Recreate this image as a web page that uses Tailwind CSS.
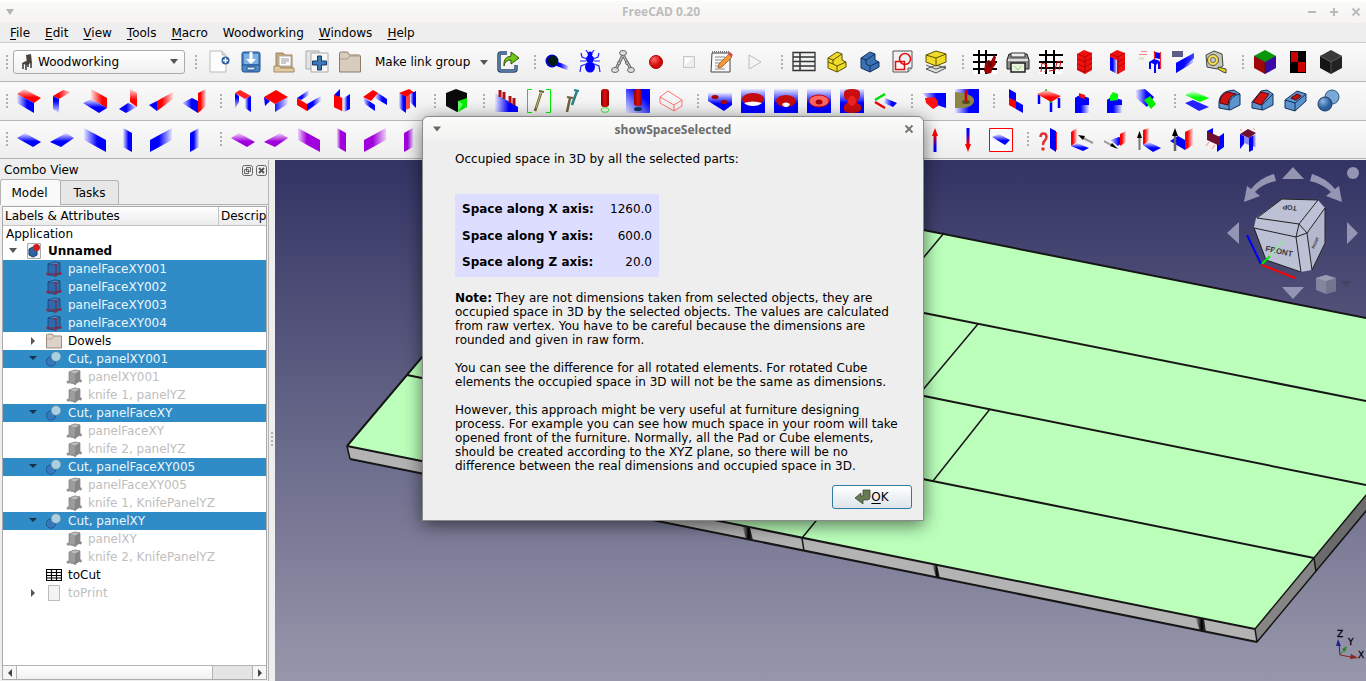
<!DOCTYPE html>
<html lang="en">
<head>
<meta charset="utf-8">
<title>FreeCAD 0.20</title>
<script src="https://cdn.jsdelivr.net/npm/@tailwindcss/browser@4"></script>
</head>
<body class="relative flex h-screen flex-col overflow-hidden bg-[#eeeeee] font-['DejaVu_Sans',sans-serif] text-xs leading-[14px] text-black">

<!-- shared gradients and symbols -->
<svg class="absolute size-0" aria-hidden="true">
  <defs>
    <linearGradient id="bR"><stop offset="0" stop-color="#00f"/><stop offset=".4" stop-color="#00f"/><stop offset="1" stop-color="#e6e6ff"/></linearGradient>
    <linearGradient id="bL"><stop offset="0" stop-color="#e6e6ff"/><stop offset=".6" stop-color="#00f"/></linearGradient>
    <linearGradient id="bD" x2="0" y2="1"><stop offset=".3" stop-color="#00f"/><stop offset="1" stop-color="#e6e6ff"/></linearGradient>
    <linearGradient id="bU" x2="0" y2="1"><stop offset="0" stop-color="#e6e6ff"/><stop offset=".6" stop-color="#00f"/></linearGradient>
    <linearGradient id="bDiag" x1="1" y2="1" x2="0"><stop offset=".3" stop-color="#00f"/><stop offset="1" stop-color="#e6e6ff"/></linearGradient>
    <linearGradient id="rR"><stop offset=".3" stop-color="#f00"/><stop offset="1" stop-color="#ffe0e0"/></linearGradient>
    <linearGradient id="rL"><stop offset="0" stop-color="#ffe0e0"/><stop offset=".7" stop-color="#f00"/></linearGradient>
    <linearGradient id="rU" x2="0" y2="1"><stop offset="0" stop-color="#ffd8d8"/><stop offset=".6" stop-color="#f00"/></linearGradient>
    <linearGradient id="pU" x2="0" y2="1"><stop offset="0" stop-color="#f3dcfb"/><stop offset=".6" stop-color="#a000dc"/></linearGradient>
    <linearGradient id="pR"><stop offset=".4" stop-color="#a000dc"/><stop offset="1" stop-color="#ead0f6"/></linearGradient>
    <linearGradient id="pL"><stop offset="0" stop-color="#ead0f6"/><stop offset=".4" stop-color="#a000dc"/></linearGradient>
    <linearGradient id="gU" x2="0" y2="1"><stop offset="0" stop-color="#dfffdf"/><stop offset=".6" stop-color="#0f0"/></linearGradient>
    <linearGradient id="cap"><stop offset="0" stop-color="#8c0000"/><stop offset=".5" stop-color="#e01010"/><stop offset="1" stop-color="#8c0000"/></linearGradient>
    <linearGradient id="kR"><stop offset=".2" stop-color="#000"/><stop offset="1" stop-color="#ddd"/></linearGradient>
    <linearGradient id="arU" x2="0" y2="1"><stop offset=".3" stop-color="#f00"/><stop offset=".8" stop-color="#00f"/></linearGradient>
    <linearGradient id="arD" x2="0" y2="1"><stop offset=".2" stop-color="#00f"/><stop offset=".7" stop-color="#f00"/></linearGradient>
    <radialGradient id="ball" cx=".35" cy=".3"><stop offset="0" stop-color="#f66"/><stop offset="1" stop-color="#d00a0a"/></radialGradient>
    <radialGradient id="sph" cx=".35" cy=".3"><stop offset="0" stop-color="#8fb8e4"/><stop offset="1" stop-color="#2c5f9e"/></radialGradient>
    <linearGradient id="sky" x2="0" y2="1"><stop offset="0" stop-color="#333364"/><stop offset="1" stop-color="#9797ab"/></linearGradient>
    <linearGradient id="knot"><stop offset="0" stop-color="#000" stop-opacity="0"/><stop offset=".6" stop-color="#000"/><stop offset="1" stop-color="#111" stop-opacity=".7"/></linearGradient>
  </defs>
  <symbol id="part" viewBox="0 0 16 16"><path d="M2 3l7-2 5 1v11l-5 2-7-1z" fill="#2c6aad" stroke="#1b3f70" stroke-width=".8"/><path d="M2 3l7-2 5 1-4 2z" fill="#4c8ac8" stroke="#1b3f70" stroke-width=".6"/><path d="M10 4v10" stroke="#7a2342"/><path d="M1 13h8l5-1" stroke="#7a2342" fill="none"/><circle cx="9.500" cy="4" r="1.200" fill="#a32036"/><circle cx="1.500" cy="13" r="1.300" fill="#a32036"/><circle cx="9.500" cy="14.500" r="1.300" fill="#a32036"/><circle cx="14.500" cy="12.500" r="1.300" fill="#a32036"/></symbol>
  <symbol id="ghost" viewBox="0 0 16 16"><path d="M3 3l6-2 5 1v10l-5 3-6-2z" fill="#9c9c9c" stroke="#808080" stroke-width=".7"/><path d="M3 3l6-2 5 1-5 3z" fill="#bdbdbd" stroke="#858585" stroke-width=".5"/><path d="M9 5l5-3v10l-5 3z" fill="#868686"/><circle cx="2" cy="13" r="1.500" fill="#999"/><circle cx="9" cy="14.500" r="1.400" fill="#8c8c8c"/><circle cx="14.500" cy="12" r="1.400" fill="#8c8c8c"/><path d="M1 13.500l8 1" stroke="#8c8c8c"/></symbol>
  <symbol id="cut" viewBox="0 0 16 16"><circle cx="5" cy="10.500" r="4.700" fill="#3578bc" stroke="#1b4f88" stroke-width=".8"/><circle cx="10" cy="5.500" r="5" fill="#a9cfe0" stroke="#4f7f9f" stroke-width=".8"/></symbol>
</svg>

<!-- title bar -->
<header class="relative flex h-[23px] shrink-0 items-center justify-between border-t border-white bg-gradient-to-b from-[#fbfbfa] to-[#f4f3f1] px-[5px]">
  <button aria-label="Window menu" class="flex"><svg class="h-2.5 w-2.5" viewBox="0 0 10 10"><path d="M1 2h8L5 8z" fill="#b4b4b4"/></svg></button>
  <h1 class="font-['Open_Sans',sans-serif] text-xs font-bold text-[#bdbdbd]">FreeCAD 0.20</h1>
  <div class="flex gap-3 pr-0">
    <button aria-label="Minimize"><svg class="h-2.5 w-2.5" viewBox="0 0 10 10"><path d="M1 5h8" stroke="#bbb" stroke-width="2"/></svg></button>
    <button aria-label="Maximize"><svg class="h-2.5 w-2.5" viewBox="0 0 10 10"><path d="M1 5h8M5 1v8" stroke="#bbb" stroke-width="2"/></svg></button>
    <button aria-label="Close"><svg class="h-2.5 w-2.5" viewBox="0 0 10 10"><path d="M1.500 1.500l7 7M8.500 1.500l-7 7" stroke="#bbb" stroke-width="2"/></svg></button>
  </div>
</header>

<!-- menu bar -->
<nav class="flex h-5 shrink-0 items-center gap-[15px] border-b border-[#cccccc] px-[10px] [&_u]:underline-offset-2">
  <button><u>F</u>ile</button><button><u>E</u>dit</button><button><u>V</u>iew</button><button><u>T</u>ools</button><button><u>M</u>acro</button><button>Woodworking</button><button><u>W</u>indows</button><button><u>H</u>elp</button>
</nav>

<!-- toolbar 1 -->
<div class="flex h-[39px] shrink-0 items-center gap-[13px] border-b border-[#b4b4b4] bg-gradient-to-b from-[#fafafa] to-[#eeeeee] pl-[5px] [&_i]:h-[17px] [&_i]:w-1 [&_i]:bg-[radial-gradient(circle,#b0b0b0_1px,transparent_1px)] [&_i]:bg-[size:4px_4px] [&_button>svg]:size-6">
  <div class="flex items-center gap-1">
    <i></i>
    <div class="relative">
      <select aria-label="Workbench" class="h-6 w-[172px] appearance-none rounded-[3px] border border-[#aaaaaa] bg-gradient-to-b from-white to-[#f0f0f0] pl-6"><option>Woodworking</option></select>
      <svg class="pointer-events-none absolute left-2 top-1 h-4 w-3" viewBox="0 0 12 16"><path d="M5 1l5-1 1 9-5 1zM1 9l4-2 5 2-5 2z" fill="#4a4440"/><path d="M2 9v6M5 10v6M10 9v5M7 9v4" stroke="#3a3633" stroke-width="1.500"/></svg>
      <svg class="pointer-events-none absolute right-[7px] top-[9px] h-[5px] w-2" viewBox="0 0 8 5"><path d="M0 0h8L4 5z" fill="#555"/></svg>
    </div>
  </div>
  <div class="-ml-1 flex items-center gap-[9px]">
    <i class="-mr-px"></i>
    <button aria-label="New"><svg viewBox="0 0 24 24"><path d="M4 1h12l4 4v17H4z" fill="#fdfdfd" stroke="#bbb"/><path d="M16 1v4h4" fill="#ddd" stroke="#bbb"/><circle cx="19.500" cy="10.500" r="4" fill="#2d62a3"/><path d="M17 10.500h5M19.500 8v5" stroke="#fff" stroke-width="1.500"/></svg></button>
    <button aria-label="Save"><svg viewBox="0 0 24 24"><rect x="3" y="2" width="18" height="20" rx="2" fill="#4a86c8" stroke="#1f4f8a"/><rect x="5" y="4" width="14" height="10" fill="#7fb0e0"/><path d="M3 15h18" stroke="#1f4f8a"/><path d="M10.500 2v7H7l5 5 5-5h-3.500V2z" fill="#fff"/><rect x="8" y="17" width="8" height="3" rx="1" fill="#dce9f6" stroke="#1f4f8a"/></svg></button>
    <button aria-label="Open"><svg viewBox="0 0 24 24"><path d="M4 3h7l2 2h7v14H4z" fill="#c9a87a" stroke="#a08058"/><rect x="7" y="6" width="12" height="10" fill="#fff" stroke="#aaa"/><path d="M9 9h8M9 11h8M9 13h5" stroke="#999"/><path d="M2 16h5l2 2h13v4H2z" fill="#e2cba4" stroke="#a58a62"/></svg></button>
    <button aria-label="Merge project"><svg viewBox="0 0 24 24"><path d="M1 1h13v18H1z" fill="#e4e4e4" stroke="#aaa"/><path d="M6 3h17v19H6z" fill="#f7f7f7" stroke="#aaa"/><path d="M12.500 6h4v5h5v4h-5v5h-4v-5h-5v-4h5z" fill="#3f76b5" stroke="#173a66"/></svg></button>
    <button aria-label="Create group"><svg viewBox="0 0 24 24"><path d="M1.500 22V3l1-1h7l2 3h10l1 1v16z" fill="#d8ccbf" stroke="#8d7b6d"/><path d="M2 9h7l3-3h10" fill="none" stroke="#a8998b"/></svg></button>
    <button class="ml-1 flex items-center gap-[10px] whitespace-nowrap">Make link group<svg class="mt-px !h-[5px] !w-2" viewBox="0 0 8 5"><path d="M0 0h8L4 5z" fill="#555"/></svg></button>
    <button aria-label="Export link" class="-ml-px"><svg viewBox="0 0 24 24"><path d="M11 3H5Q3 3 3 5v14q0 2 2 2h13q2 0 2-2v-4" fill="none" stroke="#274a70" stroke-width="3.500"/><path d="M11 3H5Q3 3 3 5v14q0 2 2 2h13q2 0 2-2v-4" fill="none" stroke="#7ea2c9"/><path d="M8 16q-1-9 7-10V2l8 6-8 6v-4q-6 0-7 6z" fill="#73c41d" stroke="#2c5b08"/></svg></button>
  </div>
  <div class="flex items-center gap-[9px]">
    <i class="-mr-px"></i>
    <button aria-label="Zoom tool"><svg viewBox="0 0 24 24"><path d="M10 11l14 5-2 4-13-5z" fill="url(#bR)"/><circle cx="7" cy="11" r="6.500" fill="#0000c8"/><circle cx="8" cy="11" r="5" fill="#021d10"/></svg></button>
    <button aria-label="Debug"><svg viewBox="0 0 24 24"><circle cx="12" cy="4" r="2.500" fill="#00f"/><ellipse cx="12" cy="9" rx="4" ry="3.500" fill="#00f"/><ellipse cx="12" cy="17" rx="5" ry="5.500" fill="#00f"/><path d="M9 9L4 7 3 3M15 9l5-2 1-4M8 11H2M16 11h6M8 14l-5 2-1 6M16 14l5 2 1 6M10 3L8 0M14 3l2-3" fill="none" stroke="#22f" stroke-width="1.200"/></svg></button>
    <button aria-label="Dependency graph"><svg viewBox="0 0 24 24"><g fill="none" stroke="#6f6f68" stroke-width="3"><path d="M12 5L5 19M12 5l8 14"/></g><path d="M12 5L5 19M12 5l8 14" stroke="#ccc" fill="none"/><g fill="#ddd" stroke="#666"><ellipse cx="12" cy="3" rx="3.500" ry="2.500"/><circle cx="8" cy="13" r="1.500"/><circle cx="16" cy="13" r="1.500"/><ellipse cx="4" cy="20" rx="3.500" ry="2.500"/><ellipse cx="20" cy="20" rx="3.500" ry="2.500"/></g></svg></button>
    <button aria-label="Record macro"><svg viewBox="0 0 24 24"><circle cx="12" cy="12" r="6.500" fill="url(#ball)" stroke="#a00"/></svg></button>
    <button aria-label="Stop macro"><svg viewBox="0 0 24 24"><rect x="6.500" y="6.500" width="11" height="11" fill="#eee" stroke="#c8c8c8"/><path d="M8 8h7l-7 7z" fill="#fff"/></svg></button>
    <button aria-label="Macros"><svg viewBox="0 0 24 24"><path d="M2 3h18v19H1z" fill="#fafafa" stroke="#444"/><path d="M2 2h18" stroke="#777" stroke-width="2" stroke-dasharray="1 1"/><path d="M5 7h10M5 10h9M5 13h7M5 16h5M5 19h10" stroke="#888"/><path d="M8 18l1-4L19 4l3 3-10 10z" fill="#f49a3c" stroke="#a5541b" stroke-width=".8"/><path d="M18 4l2-2 3 3-2 2z" fill="#d45"/></svg></button>
    <button aria-label="Run macro"><svg viewBox="0 0 24 24"><path d="M6 5v14l12-7z" fill="#f4f4f4" stroke="#bcbcbc"/></svg></button>
  </div>
  <div class="flex items-center gap-[9px]">
    <i class="-mr-px"></i>
    <button aria-label="Spreadsheet"><svg viewBox="0 0 24 24"><path d="M1 2.500h22v18H1z" fill="#eef2ee" stroke="#333" stroke-width="1.300"/><path d="M1 7h22M1 11.500h22M1 16h22M8 2v18" stroke="#333" stroke-width="1.500"/></svg></button>
    <button aria-label="Yellow part"><svg viewBox="0 0 24 24"><path d="M3 12V8l9-6 5 2v6l4 2v5l-9 5-9-4z" fill="#f0da2a" stroke="#5c5000"/><path d="M3 8l5 2 9-6M8 10v4l4 2 9-4M3 12l5 2M12 16v6" fill="none" stroke="#5c5000"/></svg></button>
    <button aria-label="Blue part"><svg viewBox="0 0 24 24"><path d="M3 18V8l9-6 5 2v6l4 2v5l-9 5z" fill="#3a71b4" stroke="#12305a"/><path d="M3 8l5 2 9-6M8 10v4l4 2 9-4M12 16v6" fill="none" stroke="#12305a"/></svg></button>
    <button aria-label="Sketch"><svg viewBox="0 0 24 24"><path d="M2 1h19v17l-4 4H2z" fill="#f3f3f3" stroke="#555"/><path d="M21 18h-4v4" fill="#ccc" stroke="#555"/><rect x="4.500" y="11.500" width="9" height="8" fill="none" stroke="#d11" stroke-width="1.500"/><circle cx="14" cy="9" r="5.500" fill="none" stroke="#d11" stroke-width="1.500"/></svg></button>
    <button aria-label="Pad"><svg viewBox="0 0 24 24"><path d="M2 19l10-4 10 3-10 5z" fill="#ddd" stroke="#555"/><path d="M2 15l10 4 10-3" fill="none" stroke="#555"/><path d="M2 5l10-4 10 3v8l-10 4-10-4z" fill="#f0da2a" stroke="#5c5000"/><path d="M2 5l10 3 10-4M12 8v8" fill="none" stroke="#5c5000"/></svg></button>
  </div>
  <div class="flex items-center gap-[9px]">
    <i class="-mr-px"></i>
    <button aria-label="Grid"><svg viewBox="0 0 24 24"><path d="M0 0h24v24H0z" fill="#fff"/><path d="M0 5h24M0 12h24M0 19h24M6 0v24M13 0v24" stroke="#000" stroke-width="2"/><path d="M12 14l3-4 3 1 3-6 2 2-1 4 1 3-3 4-2 5-4 1-3-3z" fill="#9c0404"/><ellipse cx="17" cy="14" rx="2" ry="3" fill="#600"/></svg></button>
    <button aria-label="Print"><svg viewBox="0 0 24 24"><path d="M3 4h18l2 6v9H1v-9z" fill="#8c8c8c" stroke="#222"/><path d="M5 3h14v4H5z" fill="#eee" stroke="#333"/><path d="M2 10h20" stroke="#ddd" stroke-width="2"/><path d="M5 13h14v9H5z" fill="#e8f2dc" stroke="#222" stroke-width="1.500"/><path d="M8 16l4 4 3-4" stroke="#9c7" fill="none"/></svg></button>
    <button aria-label="Grid edges"><svg viewBox="0 0 24 24"><path d="M0 0h24v24H0z" fill="#fff"/><path d="M0 5h24M0 12h24M0 18h24M7 0v24M15 0v24" stroke="#000" stroke-width="2"/><path d="M3 13l-1 9M3 13l5 2-2 7M10 21l6-1 2-8M18 12l4-1-2 9" fill="none" stroke="#d00"/></svg></button>
    <button aria-label="Drawers"><svg viewBox="0 0 24 24"><path d="M5 4l7-4 8 3v17l-7 4-8-4z" fill="#f01010"/><path d="M5 4l8 3 7-4M13 7v17M5 9l8 3 7-4M5 14l8 3 7-4M5 19l8 3 7-4" stroke="#800" fill="none" stroke-width=".6"/></svg></button>
    <button aria-label="Cabinet"><svg viewBox="0 0 24 24"><path d="M5 4l7-4 8 3v17l-7 4-8-4z" fill="#f01010"/><path d="M5 7l7 3v14l-7-4z" fill="url(#bR)"/><path d="M5 4l8 3 7-4M13 7v17M13 12l7-4M13 17l7-4" stroke="#800" fill="none" stroke-width=".6"/></svg></button>
    <button aria-label="Chair"><svg viewBox="0 0 24 24"><path d="M3 1.500h6M1 4.500h8" stroke="#e88"/><path d="M1 7h5v3H1z" fill="#dde6c8"/><path d="M17 2l5 1v6l-5-1z" fill="#00f"/><path d="M16.500 1v11M22.500 2v17" stroke="#f22" stroke-width="1.200"/><path d="M11 12l5-3 6 2-4 4z" fill="#00f"/><path d="M12 12v7M17 14v9M21 12v7" stroke="#00f" stroke-width="2"/></svg></button>
    <button aria-label="Panel"><svg viewBox="0 0 24 24"><path d="M1 1h11v6H1z" fill="#5c5c86"/><path d="M5 13L23 3v9L5 23z" fill="url(#bR)"/><path d="M5 13L23 3v5L5 23z" fill="#00f" opacity=".7"/></svg></button>
    <button aria-label="Measure"><svg viewBox="0 0 24 24"><path d="M2 5l8-4 8 3 1 12-6 3-10-2z" fill="#c4c8b8" stroke="#444"/><circle cx="9" cy="10" r="5.500" fill="#f6e04a" stroke="#555"/><circle cx="9" cy="10" r="2.500" fill="#ccc" stroke="#666"/><path d="M14 17l8 2v4l-3-1-5-3z" fill="#e8d020" stroke="#444"/></svg></button>
  </div>
  <div class="flex items-center gap-[9px]">
    <i class="-mr-px"></i>
    <button aria-label="Colours"><svg viewBox="0 0 24 24"><path d="M1 6l11-6 11 6-11 6z" fill="#0a960a"/><path d="M1 6l11 6v12L1 18z" fill="#a00808"/><path d="M23 6l-11 6v12l11-6z" fill="#3a0aa8"/><path d="M1 6l11 6 11-6M12 12v12" stroke="#222" fill="none" stroke-width=".6"/></svg></button>
    <button aria-label="Checker"><svg viewBox="0 0 24 24"><path d="M4 1h16v22H4z" fill="#000"/><path d="M5 2h7v10H5zM12 12h7v10h-7z" fill="#c00"/></svg></button>
    <button aria-label="Black cube"><svg viewBox="0 0 24 24"><path d="M1 6l11-6 11 6-11 6z" fill="#3a3a38"/><path d="M1 6l11 6v12L1 18z" fill="#151515"/><path d="M23 6l-11 6v12l11-6z" fill="#222220"/><path d="M1 6l11 6 11-6M12 12v12" stroke="#555" fill="none"/></svg></button>
  </div>
</div>

<!-- toolbar 2 -->
<div class="flex h-[39px] shrink-0 items-center gap-[13px] border-b border-[#b4b4b4] bg-gradient-to-b from-[#fafafa] to-[#eeeeee] pl-[5px] [&_i]:-mr-px [&_i]:h-[17px] [&_i]:w-1 [&_i]:bg-[radial-gradient(circle,#b0b0b0_1px,transparent_1px)] [&_i]:bg-[size:4px_4px] [&_svg]:size-6 [&>div]:flex [&>div]:items-center [&>div]:gap-[9px]">
  <div><i></i>
    <button aria-label="Corner 1"><svg viewBox="0 0 24 24"><path d="M0 5l7-5 17 9-7 5z" fill="url(#rU)"/><path d="M0 5l17 9v10L0 14z" fill="url(#bL)"/></svg></button>
    <button aria-label="Corner 2"><svg viewBox="0 0 24 24"><path d="M3 7L13 1l8 2L9 10z" fill="url(#rR)"/><path d="M3 7l6 3v14l-6-4z" fill="url(#bD)"/></svg></button>
    <button aria-label="Corner 3"><svg viewBox="0 0 24 24"><path d="M8 0l16 9v10L8 10z" fill="url(#rL)"/><path d="M0 14l8-4 16 9-8 5z" fill="url(#bU)"/></svg></button>
    <button aria-label="Corner 4"><svg viewBox="0 0 24 24"><path d="M14 0l7 4v14l-7-5z" fill="url(#rU)"/><path d="M3 20l9-6 9 4-11 6z" fill="url(#bR)"/></svg></button>
    <button aria-label="Corner 5"><svg viewBox="0 0 24 24"><path d="M0 16l8-4v10z" fill="#00f"/><path d="M8 12l16-9v7L8 22z" fill="url(#rR)"/></svg></button>
    <button aria-label="Corner 6"><svg viewBox="0 0 24 24"><path d="M0 14l10-5 6 3v12z" fill="url(#bL)"/><path d="M16 4l8-4v17l-8 7z" fill="url(#rR)"/></svg></button>
  </div>
  <div><i></i>
    <button aria-label="Frame 1"><svg viewBox="0 0 24 24"><path d="M4 4l4 3v6l-4 7z" fill="url(#bD)"/><path d="M4 4l5-3 11 6-6 3z" fill="#f22"/><path d="M14 10l6-3v16l-6-4z" fill="url(#bL)"/></svg></button>
    <button aria-label="Frame 2"><svg viewBox="0 0 24 24"><path d="M0 8l6 4-5 5zM11 15l13-7v7l-13 8z" fill="url(#bR)"/><path d="M0 8l12-7 12 7-13 7z" fill="#f00"/></svg></button>
    <button aria-label="Frame 3"><svg viewBox="0 0 24 24"><path d="M0 9l12-8v5L4 11z" fill="url(#bR)"/><path d="M0 9l10 6v7L0 16z" fill="#f00"/><path d="M10 15l14-8v5l-14 10z" fill="url(#bR)"/></svg></button>
    <button aria-label="Frame 4"><svg viewBox="0 0 24 24"><path d="M4 6l6-6v9z" fill="#00f"/><path d="M4 6l10 3v14L4 18z" fill="url(#rR)"/><path d="M4 6l8 3v13l-8-4z" fill="#f00"/><path d="M14 9l6-4v15l-6 3z" fill="url(#bL)"/></svg></button>
    <button aria-label="Frame 5"><svg viewBox="0 0 24 24"><path d="M12 2l12 8v6L12 9z" fill="url(#bL)"/><path d="M0 8l10-7 5 3-7 8z" fill="#f00"/><path d="M0 8l12 8v6L2 15z" fill="url(#bL)"/></svg></button>
    <button aria-label="Frame 6"><svg viewBox="0 0 24 24"><path d="M3 4l10-4 6 4-9 5z" fill="#f00"/><path d="M10 8l4-3v14l-4 2z" fill="#f44"/><path d="M3 4l7 4v16l-7-5z" fill="url(#bL)"/><path d="M14 5l6-3v17l-6-6z" fill="url(#bL)"/></svg></button>
  </div>
  <div><i></i>
    <button aria-label="Select face"><svg viewBox="0 0 24 24"><path d="M1 4l10-4 11 4v13l-10 6L1 17z" fill="#0a0a0a"/><path d="M13 12l9-3v9l-9 5z" fill="#0e0"/><path d="M13 23V12l5 3z" fill="#6f6"/></svg></button>
  </div>
  <div><i></i>
    <button aria-label="Dowel row"><svg viewBox="0 0 24 24"><path d="M1 4l23 14v5H1z" fill="url(#bL)"/><path d="M6 1v7M10 3v7M16 7v7M20 9v7" stroke="#b01010" stroke-width="3"/></svg></button>
    <button aria-label="Screw frame"><svg viewBox="0 0 24 24"><path d="M5 .5H.500v23H5M19 .5h4.500v23H19" fill="none" stroke="#0e0"/><path d="M14 4L8 22" stroke="#6b6326" stroke-width="2.500"/><path d="M14 4L9 19" stroke="#c4b878"/><path d="M12 2l5 1" stroke="#6b6326" stroke-width="2"/></svg></button>
    <button aria-label="Two screws"><svg viewBox="0 0 24 24"><path d="M17 2l-5 14" stroke="#2b7f86" stroke-width="2.500"/><path d="M14 1l5 1" stroke="#2b7f86" stroke-width="2"/><path d="M10 9L7 23" stroke="#6b6340" stroke-width="2.500"/><path d="M7 8l6 1" stroke="#6b6340" stroke-width="2"/></svg></button>
    <button aria-label="Dowel"><svg viewBox="0 0 24 24"><rect x="8" y="0" width="8" height="18" rx="3" fill="url(#cap)"/><ellipse cx="12" cy="21" rx="4" ry="2.300" fill="none" stroke="#3e3"/></svg></button>
    <button aria-label="Drill"><svg viewBox="0 0 24 24"><path d="M0 0h24v24H0z" fill="url(#bDiag)"/><rect x="8" y="0" width="8" height="17" rx="3" fill="url(#cap)"/><ellipse cx="12" cy="20" rx="4" ry="2" fill="#043a5a"/></svg></button>
    <button aria-label="Wire box"><svg viewBox="0 0 24 24"><path d="M1 8l8-6 14 9v6l-8 5-14-8zM1 8l14 8 8-5M15 16v6" fill="none" stroke="#f55" stroke-width=".8"/></svg></button>
  </div>
  <div><i></i>
    <button aria-label="Holes"><svg viewBox="0 0 24 24"><path d="M0 4h24v12l-8 6L0 12z" fill="url(#bU)"/><ellipse cx="7" cy="8" rx="3.500" ry="2" fill="#a00"/><ellipse cx="16" cy="13" rx="3.500" ry="2" fill="#a00"/></svg></button>
    <button aria-label="Round hole"><svg viewBox="0 0 24 24"><path d="M0 0h24v24H0z" fill="url(#bU)"/><ellipse cx="12" cy="10" rx="11" ry="6" fill="#c40c0c"/><path d="M3 14q9-3 18 0-3 3-9 3t-9-3z" fill="#fff"/></svg></button>
    <button aria-label="Countersink"><svg viewBox="0 0 24 24"><path d="M0 0h24v24H0z" fill="url(#bU)"/><ellipse cx="12" cy="12" rx="10" ry="6" fill="#c40c0c"/><path d="M8 15q4-3 8 0-1 3-4 3t-4-3z" fill="#fff"/></svg></button>
    <button aria-label="Counterbore"><svg viewBox="0 0 24 24"><path d="M0 0h24v24H0z" fill="url(#bU)"/><ellipse cx="12" cy="12" rx="10" ry="6" fill="#f66" stroke="#c00"/><ellipse cx="12" cy="13" rx="3.500" ry="2.500" fill="#a00"/></svg></button>
    <button aria-label="Double bore"><svg viewBox="0 0 24 24"><path d="M0 0h24v24H0z" fill="url(#bU)"/><path d="M4 4q0-4 8-4t8 4v4q0 2-3 3v3q4 1 4 4v3q-2 3-9 3t-8-3v-3q0-3 3-4v-3q-3-1-3-3z" fill="#c80e0e"/><ellipse cx="12" cy="12" rx="4" ry="5" fill="#e22"/></svg></button>
    <button aria-label="Directions"><svg viewBox="0 0 24 24"><path d="M2 11L12 5" stroke="#0d0" stroke-width="2.500"/><path d="M2 13l10 6" stroke="#e00" stroke-width="2.500"/><path d="M12 9l12 5-4 4-9-4z" fill="url(#bL)"/></svg></button>
  </div>
  <div><i></i>
    <button aria-label="Magnet edge"><svg viewBox="0 0 24 24"><path d="M0 4h24v15l-12-4z" fill="url(#bL)"/><path d="M3 9l9-1 4 4v5l-5 3-7-6z" fill="#f11"/></svg></button>
    <button aria-label="Pocket"><svg viewBox="0 0 24 24"><path d="M0 0h24v24H0z" fill="url(#bL)"/><path d="M0 3q20 2 19 9-1 8-19 7z" fill="#8d8646"/><ellipse cx="11" cy="13" rx="4" ry="2" fill="#555020"/><path d="M11 1v12" stroke="#c00" stroke-width="2.500"/></svg></button>
  </div>
  <div><i></i>
    <button aria-label="Shift panel"><svg viewBox="0 0 24 24"><path d="M5 0l7 4v9l-7-4z" fill="#00f"/><path d="M5 9l7 3v8l-7-4z" fill="#f00"/><path d="M12 12l7 4v8l-7-4z" fill="#00f"/></svg></button>
    <button aria-label="Table"><svg viewBox="0 0 24 24"><path d="M2 6v9M14 12v11M22 9v10" stroke="#00f" stroke-width="2.500"/><path d="M0 5l9-4 15 6-10 6z" fill="url(#rU)"/><circle cx="14" cy="13" r="1" fill="#0c0"/><circle cx="9" cy="1" r="1" fill="#0c0"/></svg></button>
    <button aria-label="Box red"><svg viewBox="0 0 24 24"><path d="M5 9l5-3 9 3v15H5z" fill="url(#bR)"/><path d="M5 9l5-3 9 3v7H5z" fill="#00f"/><path d="M9 4l6 2v4l-6-2z" fill="#e11"/></svg></button>
    <button aria-label="Box green"><svg viewBox="0 0 24 24"><path d="M4 11l5-3 10 3v13H4z" fill="url(#bR)"/><path d="M4 11l5-3 10 3v5H4z" fill="#00f"/><path d="M7 7l3-4 5 2v6l-8 1z" fill="#0f0"/></svg></button>
    <button aria-label="Roll"><svg viewBox="0 0 24 24"><path d="M0 1l9-1 9 8-7 10L0 9z" fill="url(#bL)"/><path d="M8 11l6-4 6 8-5 5z" fill="#0e0"/></svg></button>
  </div>
  <div><i></i>
    <button aria-label="Sheets"><svg viewBox="0 0 24 24"><path d="M0 14l8-3 16 7-10 4z" fill="#22f"/><path d="M0 6l8-4 16 7-9 4z" fill="url(#gU)"/></svg></button>
    <button aria-label="Fillet"><svg viewBox="0 0 24 24"><path d="M1 13q1-9 9-11l6-1 6 4v11l-10 5-11-2z" fill="#5b93cf" stroke="#12305a"/><path d="M2 14q0-9 8-11l8 2q-8 2-8 11z" fill="#d01414" stroke="#600"/><path d="M11 21v-6q1-8 11-10" fill="none" stroke="#12305a"/></svg></button>
    <button aria-label="Chamfer"><svg viewBox="0 0 24 24"><path d="M1 13l9-11 6-1 6 4v11l-10 5-11-2z" fill="#5b93cf" stroke="#12305a"/><path d="M2 13L10 3l8 2-8 11z" fill="#d01414" stroke="#600"/><path d="M11 21v-5L22 5" fill="none" stroke="#12305a"/></svg></button>
    <button aria-label="Thickness"><svg viewBox="0 0 24 24"><path d="M1 11l12-9 9 3v7l-11 10-10-3z" fill="#5b93cf" stroke="#12305a"/><path d="M1 11l10 3L22 5M11 14v8" fill="none" stroke="#12305a"/><path d="M7 9l6-4 4 2-5 4z" fill="#c01010" stroke="#600"/></svg></button>
    <button aria-label="Boolean"><svg viewBox="0 0 24 24"><circle cx="15" cy="8" r="7" fill="#7aa9d8" stroke="#2c5683"/><circle cx="8" cy="15" r="7" fill="url(#sph)" stroke="#173a66"/></svg></button>
  </div>
</div>

<!-- toolbar 3 -->
<div class="mb-px flex h-[38px] shrink-0 items-center gap-[13px] border-b border-[#b4b4b4] bg-gradient-to-b from-[#fafafa] to-[#eeeeee] pl-[5px] [&_i]:-mr-px [&_i]:h-[17px] [&_i]:w-1 [&_i]:bg-[radial-gradient(circle,#b0b0b0_1px,transparent_1px)] [&_i]:bg-[size:4px_4px] [&_svg]:size-6 [&>div]:flex [&>div]:items-center [&>div]:gap-[9px]">
  <div><i></i>
    <button aria-label="Panel XY"><svg viewBox="0 0 24 24"><path d="M0 10l8-5 16 9-8 5z" fill="url(#bU)"/></svg></button>
    <button aria-label="Panel YX"><svg viewBox="0 0 24 24"><path d="M0 14l16-9 8 5-13 9z" fill="url(#bU)"/></svg></button>
    <button aria-label="Panel XZ"><svg viewBox="0 0 24 24"><path d="M1 0l22 12v12L1 12z" fill="url(#bL)"/></svg></button>
    <button aria-label="Panel ZX"><svg viewBox="0 0 24 24"><path d="M7 0l9 5v19l-9-5z" fill="url(#bL)"/></svg></button>
    <button aria-label="Panel YZ"><svg viewBox="0 0 24 24"><path d="M1 12L23 0v12L1 24z" fill="url(#bR)"/></svg></button>
    <button aria-label="Panel ZY"><svg viewBox="0 0 24 24"><path d="M8 5l9-5v19l-9 5z" fill="url(#bR)"/></svg></button>
  </div>
  <div><i></i>
    <button aria-label="Face XY"><svg viewBox="0 0 24 24"><path d="M0 10l8-5 16 9-8 5z" fill="url(#pU)"/></svg></button>
    <button aria-label="Face YX"><svg viewBox="0 0 24 24"><path d="M0 14l16-9 8 5-13 9z" fill="url(#pU)"/></svg></button>
    <button aria-label="Face XZ"><svg viewBox="0 0 24 24"><path d="M1 0l22 12v12L1 12z" fill="url(#pL)"/></svg></button>
    <button aria-label="Face ZX"><svg viewBox="0 0 24 24"><path d="M7 0l9 5v19l-9-5z" fill="url(#pL)"/></svg></button>
    <button aria-label="Face YZ"><svg viewBox="0 0 24 24"><path d="M1 12L23 0v12L1 24z" fill="url(#pR)"/></svg></button>
    <button aria-label="Face ZY"><svg viewBox="0 0 24 24"><path d="M8 5l9-5v19l-9 5z" fill="url(#pR)"/></svg></button>
  </div>
  <div class="w-[477px]"></div>
  <div>
    <button aria-label="Move up"><svg viewBox="0 0 24 24"><path d="M12 0l3 8h-1.500v16h-3V8H9z" fill="url(#arU)"/></svg></button>
    <button aria-label="Move down"><svg viewBox="0 0 24 24"><path d="M12 24l3-8h-1.500V0h-3v16H9z" fill="url(#arD)"/></svg></button>
    <button aria-label="Space selected"><svg viewBox="0 0 24 24"><path d="M.5.500h23v23H.5z" fill="#fafaff" stroke="#f00"/><path d="M3 9l7-3 11 6-5 5z" fill="url(#bU)"/></svg></button>
  </div>
  <div><i></i>
    <button aria-label="Panel question"><svg viewBox="0 0 24 24"><path d="M2.500 9q0-3.500 3-3.500t3 3.500q0 2-2 4t-1 4" fill="none" stroke="#d33" stroke-width="2.500"/><circle cx="5" cy="21" r="1.800" fill="#d33"/><path d="M12 0l6 3v21l-6-4z" fill="#00f"/><path d="M18.500 4v18" stroke="#f22"/></svg></button>
    <button aria-label="Extend left"><svg viewBox="0 0 24 24"><path d="M0 4l6-4v14l-6 4z" fill="url(#rR)"/><path d="M0 18l6-3 12 5-6 3z" fill="url(#bU)"/><path d="M10 9l12 6" stroke="#999" stroke-width="2"/><path d="M7 7l7 1-2 4z"/></svg></button>
    <button aria-label="Extend front"><svg viewBox="0 0 24 24"><path d="M6 12l9-3 6 3-7 6z" fill="url(#bL)"/><path d="M16 6l6-3v11l-6 4z" fill="url(#rR)"/><path d="M0 13l7 4" stroke="#999" stroke-width="2"/><path d="M6 18l2-3 6 6z"/></svg></button>
    <button aria-label="Extend up"><svg viewBox="0 0 24 24"><path d="M6 2l6-2v13l-6 4z" fill="url(#rR)"/><path d="M6 17l6-3 12 6-8 4z" fill="url(#bU)"/><path d="M2.500 8v14" stroke="#777" stroke-width="2"/><path d="M2.500 3l2.500 7H0z"/></svg></button>
    <button aria-label="Extend height"><svg viewBox="0 0 24 24"><path d="M0 13l8-5 7 4v10z" fill="#00f"/><path d="M15 4l8-4v17l-8 5z" fill="url(#rR)"/><path d="M5 5v18" stroke="#666" stroke-width="2.500"/><path d="M5 0l3 8H2z"/></svg></button>
    <button aria-label="Shelf"><svg viewBox="0 0 24 24"><path d="M4 3l6-3v6l-6 6zM14 10l7-5v14l-7 5z" fill="#00f"/><path d="M4 3l13 6v9L4 12z" fill="#701030"/><path d="M3 18l3-4M9 21l3-4" stroke="#f88"/></svg></button>
    <button aria-label="Cover"><svg viewBox="0 0 24 24"><path d="M4 6l4 2v8l-4 5z" fill="#00f"/><path d="M8 8l5 2v7l-5-2z" fill="#88f"/><path d="M13 10l7-4v14l-3-2v-2l-4 6z" fill="url(#bR)"/><path d="M13 10l4-2v14l-4 2z" fill="#00f"/><path d="M4 6l8-5 8 4-7 5z" fill="#701030"/><path d="M4 1l2 2M17 0l2 2" stroke="#f88"/></svg></button>
  </div>
</div>

<main class="flex min-h-0 flex-1">
  <!-- combo view -->
  <aside class="flex w-[269px] shrink-0 flex-col border-r border-[#b4b4b4]">
    <div class="flex h-5 items-center justify-between pl-1 pr-px">
      <h2>Combo View</h2>
      <div class="flex gap-[3px]">
        <button aria-label="Float"><svg class="size-[11px]" viewBox="0 0 11 11"><rect x=".5" y=".5" width="10" height="10" rx="2" fill="none" stroke="#666"/><path d="M4.500 2.500h4v4h-4zM2.500 4.500h4v4h-4z" fill="#eee" stroke="#666"/></svg></button>
        <button aria-label="Close panel"><svg class="size-[11px]" viewBox="0 0 11 11"><rect x=".5" y=".5" width="10" height="10" rx="2" fill="none" stroke="#666"/><path d="M3 3l5 5M8 3l-5 5" stroke="#555" stroke-width="1.800"/></svg></button>
      </div>
    </div>
    <div class="flex h-[25px] items-end border-b border-[#b4b4b4]">
      <button class="-mb-px h-[26px] w-[61px] rounded-t-[3px] border border-b-0 border-[#b4b4b4] bg-[#f9f9f9] pr-0.5">Model</button>
      <button class="h-6 w-[58px] rounded-tr-[3px] border border-b-0 border-l-0 border-[#b4b4b4] bg-[#e7e7e7]">Tasks</button>
    </div>
    <div class="mb-px ml-0.5 mr-px mt-px flex min-h-0 flex-1 flex-col border border-[#aaaaaa] bg-white">
      <div class="flex h-[19px] shrink-0 items-center overflow-hidden whitespace-nowrap border-b border-[#c4c4c4] bg-gradient-to-b from-white to-[#ebebeb]">
        <span class="w-[216px] shrink-0 border-r border-[#c4c4c4] pl-0.5 leading-[18px]">Labels &amp; Attributes</span><span class="pl-0.5">Descrip</span>
      </div>
      <ul class="flex flex-1 flex-col [&_svg]:size-4 [&_svg]:shrink-0 [&>li]:flex [&>li]:h-[18px] [&>li]:shrink-0 [&>li]:items-center [&>li]:gap-1.5 [&>li]:whitespace-nowrap">
        <li class="-mb-px -mt-px pl-[3px]">Application</li>
        <li class="pl-0.5 font-bold"><svg viewBox="0 0 16 16"><path d="M4 5h8l-4 5z" fill="#555"/></svg><svg class="-ml-px" viewBox="0 0 16 16"><path d="M1.500.500h13v15h-13z" fill="#f2f2f2" stroke="#aaa"/><path d="M3 6l4-2 4 2v6l-4 2-4-2z" fill="#2d62a3" stroke="#173a66"/><circle cx="10.500" cy="4.500" r="3.500" fill="#d31c1c"/></svg>Unnamed</li>
        <li class="bg-[#308cc6] pl-[43px] text-[#edf6fb]"><svg><use href="#part"/></svg>panelFaceXY001</li>
        <li class="bg-[#308cc6] pl-[43px] text-[#edf6fb]"><svg><use href="#part"/></svg>panelFaceXY002</li>
        <li class="bg-[#308cc6] pl-[43px] text-[#edf6fb]"><svg><use href="#part"/></svg>panelFaceXY003</li>
        <li class="bg-[#308cc6] pl-[43px] text-[#edf6fb]"><svg><use href="#part"/></svg>panelFaceXY004</li>
        <li class="pl-[21px]"><svg viewBox="0 0 16 16"><path d="M7 4v8l4-4z" fill="#555"/></svg><svg viewBox="0 0 16 16"><path d="M.5 15V2l1-1h5l1 2h8v12z" fill="#ddd2c8" stroke="#9d8c7e"/><path d="M1 6h5l2-3" fill="none" stroke="#b8a99c"/></svg>Dowels</li>
        <li class="bg-[#308cc6] pl-[21px] text-[#edf6fb]"><svg viewBox="0 0 16 16"><path d="M5 5h8l-4 4z" fill="#12334a"/></svg><svg><use href="#cut"/></svg>Cut, panelXY001</li>
        <li class="pl-[63px] text-[#bebebe]"><svg><use href="#ghost"/></svg>panelXY001</li>
        <li class="pl-[63px] text-[#bebebe]"><svg><use href="#ghost"/></svg>knife 1, panelYZ</li>
        <li class="bg-[#308cc6] pl-[21px] text-[#edf6fb]"><svg viewBox="0 0 16 16"><path d="M5 5h8l-4 4z" fill="#12334a"/></svg><svg><use href="#cut"/></svg>Cut, panelFaceXY</li>
        <li class="pl-[63px] text-[#bebebe]"><svg><use href="#ghost"/></svg>panelFaceXY</li>
        <li class="pl-[63px] text-[#bebebe]"><svg><use href="#ghost"/></svg>knife 2, panelYZ</li>
        <li class="bg-[#308cc6] pl-[21px] text-[#edf6fb]"><svg viewBox="0 0 16 16"><path d="M5 5h8l-4 4z" fill="#12334a"/></svg><svg><use href="#cut"/></svg>Cut, panelFaceXY005</li>
        <li class="pl-[63px] text-[#bebebe]"><svg><use href="#ghost"/></svg>panelFaceXY005</li>
        <li class="pl-[63px] text-[#bebebe]"><svg><use href="#ghost"/></svg>knife 1, KnifePanelYZ</li>
        <li class="bg-[#308cc6] pl-[21px] text-[#edf6fb]"><svg viewBox="0 0 16 16"><path d="M5 5h8l-4 4z" fill="#12334a"/></svg><svg><use href="#cut"/></svg>Cut, panelXY</li>
        <li class="pl-[63px] text-[#bebebe]"><svg><use href="#ghost"/></svg>panelXY</li>
        <li class="pl-[63px] text-[#bebebe]"><svg><use href="#ghost"/></svg>knife 2, KnifePanelYZ</li>
        <li class="pl-[43px]"><svg viewBox="0 0 16 16"><path d="M.5 2.500h15v11H.5zM0 5.500h16M0 8.500h16M0 11h16M5.500 2v12M10.500 2v12" fill="none" stroke="#000" stroke-width="1.200"/></svg>toCut</li>
        <li class="pl-[21px] text-[#bebebe]"><svg viewBox="0 0 16 16"><path d="M7 4v8l4-4z" fill="#555"/></svg><svg viewBox="0 0 16 16"><path d="M2.500.500h11v15h-11z" fill="#f3f3f3" stroke="#bbb"/></svg>toPrint</li>
      </ul>
      <div class="flex h-[14px] shrink-0 border-t border-[#b4b4b4] bg-[#e4e4e4]">
        <button aria-label="Scroll left" class="flex w-[14px] items-center justify-center border-r border-[#b4b4b4] bg-[#f6f6f6]"><svg class="h-2 w-1" viewBox="0 0 4 8"><path d="M4 0v8L0 4z" fill="#444"/></svg></button>
        <div class="w-[196px] border-r border-[#b4b4b4] bg-gradient-to-b from-white to-[#f0f0f0]"></div>
        <button aria-label="Scroll right" class="ml-auto flex w-[14px] items-center justify-center border-l border-[#b4b4b4] bg-[#f6f6f6]"><svg class="h-2 w-1" viewBox="0 0 4 8"><path d="M0 0v8l4-4z" fill="#444"/></svg></button>
      </div>
    </div>
  </aside>
  <div class="flex w-1.5 shrink-0 items-center justify-center pt-9"><div class="h-4 w-1 bg-[radial-gradient(circle,#b0b0b0_1px,transparent_1px)] bg-[size:4px_4px]"></div></div>

  <!-- 3D view -->
  <section aria-label="3D view" class="relative min-w-0 flex-1 overflow-hidden">
    <svg class="absolute inset-0 h-full w-full font-['DejaVu_Sans',sans-serif]">
      <rect width="100%" height="100%" fill="url(#sky)"/>
      <g transform="translate(-275 -160)" stroke-linejoin="round">
        <path d="M347 446l908 183 2 13L350 459z" fill="#b3b3b3"/>
        <path d="M1255 629l59-71 2 14-59 70z" fill="#858585"/>
        <path d="M1314 558l62-75v17l-60 72z" fill="#6b6b6b"/>
        <path d="M347 446L586 163l790 157v163l-121 146z" fill="#bbffbb"/>
        <path d="M742 526l8 2 3 12-7-1z" fill="url(#knot)"/>
        <path d="M932 564l5 1 3 13-4-1z" fill="url(#knot)"/>
        <path d="M1195 617l9 2 2 13-6-1z" fill="url(#knot)"/>
        <g fill="none" stroke="#161616" stroke-width="2">
          <path d="M347 446L586 163l790 157M347 446l908 183M350 459l907 183M407 375l907 183M924 313l452 90M924 396l452 91"/>
          <path d="M1255 629l121-146M347 446l3 13M1255 629l2 13 119-143M944 233l-30 36M978 324l-62 74M990 409l-57 72M820 516l-18 22 2 13M1314 558l2 14" stroke-width="1.500"/>
        </g>
        <!-- navigation cube -->
        <g fill="#9494b3">
          <path d="M1293 167l11 12h-22zM1293 299l11-12h-22zM1227 233l12-11v22zM1358 233l-11-11v22z"/>
          <circle cx="1353" cy="173" r="6"/>
          <path d="M1274 174l2 7q-14 3-21 11l5 4-16 6 3-16 4 3q9-11 23-15zM1312 174l-2 7q13 3 21 11l-5 4 16 6-3-16-4 3q-9-11-23-15z"/>
        </g>
        <path d="M1316 278l10-3 10 4v12l-10 3-10-4z" fill="#85859f"/><path d="M1326 281l10-3v13l-10 3z" fill="#74748f"/><path d="M1316 278l10-3 10 3-10 3z" fill="#9a9ab4"/>
        <path d="M1340 281h12l-6 6z" fill="#454560"/>
        <path d="M1282 199l36 1 7 8v35l-13 27-11 2-35-12-12-33 2-9z" fill="#bcc1d6"/>
        <path d="M1307 233l18-25v35l-13 27z" fill="#b3b8ce"/>
        <path d="M1282 199l36 1-19 24-42-6zM1254 228l42 9 5 35-35-12zM1299 224l8 9-11 4zM1307 233l18-25M1307 233l5 37M1325 208v35l-13 27" fill="none" stroke="#222" stroke-width="1"/>
        <text x="1265" y="251" font-size="8" font-weight="bold" fill="#3a3a44" transform="rotate(12 1265 251)" font-family="Liberation Sans">FRONT</text>
        <text x="1297" y="206" font-size="7" font-weight="bold" fill="#333" transform="rotate(186 1297 206)" font-family="Liberation Sans">TOP</text>
        <text x="1314" y="249" font-size="4" font-weight="bold" fill="#333" transform="rotate(-65 1314 249)" font-family="Liberation Sans">RIGHT</text>
        <g stroke-width="2"><path d="M1247 235l14 29" stroke="#00f"/><path d="M1262 264l8-8" stroke="#0e0"/><path d="M1270 256l13-15" stroke="#9be0a8"/><path d="M1262 265l33 13" stroke="#f00"/></g>
        <!-- axis cross -->
        <path d="M1340 655l-1-11" stroke="#222288"/><path d="M1336 646l2-7 3 7z" fill="#222288"/>
        <path d="M1340 655l4-5" stroke="#228822"/><path d="M1342 649l5-3-2 6z" fill="#228822"/>
        <path d="M1340 655l11 2" stroke="#882222"/><path d="M1351 654l7 4-8 1z" fill="#882222"/>
        <g font-size="9" fill="#000" stroke="#000" stroke-width=".3"><text x="1337" y="637">Z</text><text x="1348" y="645">Y</text><text x="1358" y="658">X</text></g>
      </g>
    </svg>
  </section>
</main>

<!-- dialog -->
<div role="dialog" aria-labelledby="dlg" class="absolute left-[422px] top-[116px] w-[502px] rounded-t-md border border-[#8a8a8a] bg-[#eeeeee] shadow-[0_4px_18px_rgba(0,0,0,0.55)]">
  <div class="flex h-6 items-center justify-between rounded-t-md bg-gradient-to-b from-[#fbfbfa] to-[#f3f2f0] px-[9px]">
    <button aria-label="Dialog menu"><svg class="size-2.5" viewBox="0 0 10 10"><path d="M1 2.500h8l-4 5z" fill="#666"/></svg></button>
    <h2 id="dlg" class="pt-px font-['Open_Sans',sans-serif] font-bold text-[#6c6c6c]">showSpaceSelected</h2>
    <button aria-label="Close dialog"><svg class="size-2.5" viewBox="0 0 10 10"><path d="M1.500 1.500l7 7M8.500 1.500l-7 7" stroke="#777" stroke-width="2"/></svg></button>
  </div>
  <div class="pb-[11px] pl-8 pr-[11px] pt-[11px]">
    <p>Occupied space in 3D by all the selected parts:</p>
    <table class="mb-[14px] mt-[28px] w-[204px] border-b border-t-2 border-[#ddddff] bg-[#ddddff]">
      <tr class="h-[27px]"><th scope="row" class="pl-[7px] text-left">Space along X axis:</th><td class="pr-[7px] text-right">1260.0</td></tr>
      <tr class="h-[27px]"><th scope="row" class="pl-[7px] text-left">Space along Y axis:</th><td class="pr-[7px] text-right">600.0</td></tr>
      <tr class="h-[27px]"><th scope="row" class="pl-[7px] text-left">Space along Z axis:</th><td class="pr-[7px] text-right">20.0</td></tr>
    </table>
    <div class="flex flex-col gap-[14px] whitespace-nowrap">
      <p><b>Note:</b> They are not dimensions taken from selected objects, they are<br>occupied space in 3D by the selected objects. The values are calculated<br>from raw vertex. You have to be careful because the dimensions are<br>rounded and given in raw form.</p>
      <p>You can see the difference for all rotated elements. For rotated Cube<br>elements the occupied space in 3D will not be the same as dimensions.</p>
      <p>However, this approach might be very useful at furniture designing<br>process. For example you can see how much space in your room will take<br>opened front of the furniture. Normally, all the Pad or Cube elements,<br>should be created according to the XYZ plane, so there will be no<br>difference between the real dimensions and occupied space in 3D.</p>
    </div>
    <button class="ml-auto mt-3 flex h-6 w-20 items-center justify-center rounded-[3px] border border-[#2f7ba6] bg-gradient-to-b from-white to-[#dde4ea]"><svg class="size-4" viewBox="0 0 16 16"><path d="M8 1h7v7q0 3-3 3H8v4L0 9l6-5v3h2z" fill="#667b54" stroke="#3c4a30" stroke-width=".8"/></svg><span><u class="underline-offset-2">O</u>K</span></button>
  </div>
</div>
</body>
</html>
